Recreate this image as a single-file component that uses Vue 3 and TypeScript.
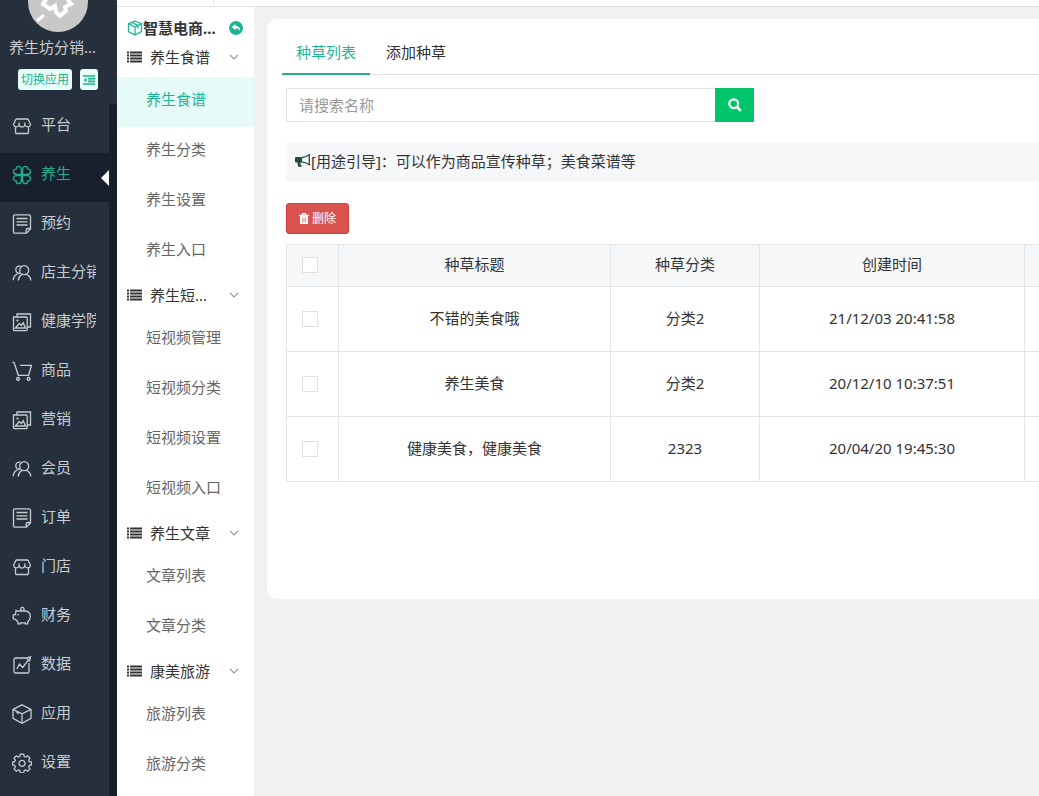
<script setup lang="ts">
import { ref } from 'vue'

interface NavItem { name: string; icon: string; active?: boolean }
interface Group { title: string; items: string[] }
interface Row { title: string; kind: string; time: string; checked: boolean }

const icons: Record<string, string> = {
  shop: 'M5 3h10q1 0 1.500 1l2 4.500a2.900 2.900 0 0 1-5.600.4V6.500M12.900 8.900a3 3 0 0 1-5.800 0V6.500M7.100 8.900a2.900 2.900 0 0 1-5.600-.4l2-4.500Q4 3 5 3M3.500 11.500v5q0 1 1 1h11q1 0 1-1v-5',
  clover: 'M9.400 9.400V5C9.400.3 3.800.3 4.200 4.200.3 3.800.3 9.400 5 9.400zM10.600 9.400V5C10.600.3 16.200.3 15.800 4.200 19.700 3.800 19.700 9.400 15 9.400zM9.400 10.600V15C9.400 19.700 3.800 19.700 4.200 15.800.3 16.200.3 10.600 5 10.600zM10.600 10.600V15C10.600 19.700 16.200 19.700 15.800 15.800 19.700 16.200 19.700 10.600 15 10.600z',
  doc: 'M3 .8h14q1.500 0 1.500 1.500V15L14.500 19.200H3q-1.500 0-1.500-1.500V2.300Q1.500.8 3 .8zM4.500 4.500h11M4.500 7.800h11M4.500 11h11M18.300 14.500h-2.600q-1.500 0-1.500 1.500v3',
  people: 'M12.200 2.700a4.500 4.500 0 1 1 0 9 4.500 4.500 0 0 1 0-9zM8 10.500C5.500 10.300 3.800 8.800 3.800 6.800 3.800 4.200 5.800 2.600 8.500 3.200M9.800 11.500C7.500 13 6.300 15 6.200 17.500M14.500 11.300C17.300 12.500 18.700 14.800 18.800 17.500M5.500 10.800C2.800 12 1.300 14.500 1.200 17.200',
  image: 'M1.500 5h12.700q1 0 1 1v11.700q0 1-1 1H2.500q-1 0-1-1zM5 5V2h13.500v13h-3M3.500 16l3.700-4.500 2.200 2 1.800-2.800 2.300 5.300zM5.500 7.500v2M4.500 8.500h2',
  cart: 'M.5 1.200l1.700.5L6.300 14.300h10.200l3-10H8M6 16.500a1.400 1.400 0 1 0 .1 0zM16.500 16.500a1.400 1.400 0 1 0 .1 0z',
  pig: 'M8 5h4.500c3 0 5 1.500 5.600 3.800q.8 2.700-.6 4.700l-1.800 2.500v1.800h-2.500v-1H8.500v1H6v-1.800L4 13.800l-2.800-1.300V9l2.300-.5L4 4.300 6.500 5.300zM10.300 1.400a1.700 1.700 0 1 0 .1 0zM6 8v1.500',
  chart: 'M14 3H3.500Q2 3 2 4.500v12Q2 18 3.500 18h12q1.500 0 1.500-1.500V8M4.800 14l2.700-5 3.200 3.500L16 5.500M14.500 3l4-1-1 4z',
  box: 'M10 .8l9 4.500v9L10 19.200l-9-4.900v-9zM1 5.300l9 4.500 9-4.500M10 9.800v9.400M4.500 8.700l2 1',
  gear: 'M8.300 1.200h3.400l.5 2.300 1.500.6 2-1.200 2.200 2.200-1.200 2 .6 1.500 2.200.5v2.800l-2.200.6-.6 1.500 1.200 2-2.200 2.200-2-1.200-1.500.6-.5 2.200H8.300l-.5-2.200-1.500-.6-2 1.200-2.200-2.200 1.200-2-.6-1.500L.6 11.900V9.100l2.100-.5.6-1.500-1.200-2 2.200-2.200 2 1.200 1.500-.6zM10 7.400a3 3 0 1 0 .1 0z',
}

const nav: NavItem[] = [
  { name: '平台', icon: 'shop' },
  { name: '养生', icon: 'clover', active: true },
  { name: '预约', icon: 'doc' },
  { name: '店主分销', icon: 'people' },
  { name: '健康学院', icon: 'image' },
  { name: '商品', icon: 'cart' },
  { name: '营销', icon: 'image' },
  { name: '会员', icon: 'people' },
  { name: '订单', icon: 'doc' },
  { name: '门店', icon: 'shop' },
  { name: '财务', icon: 'pig' },
  { name: '数据', icon: 'chart' },
  { name: '应用', icon: 'box' },
  { name: '设置', icon: 'gear' },
]

const groups: Group[] = [
  { title: '养生食谱', items: ['养生食谱', '养生分类', '养生设置', '养生入口'] },
  { title: '养生短...', items: ['短视频管理', '短视频分类', '短视频设置', '短视频入口'] },
  { title: '养生文章', items: ['文章列表', '文章分类'] },
  { title: '康美旅游', items: ['旅游列表', '旅游分类'] },
]

const keyword = ref('')
const all = ref(false)
const rows = ref<Row[]>([
  { title: '不错的美食哦', kind: '分类2', time: '21/12/03 20:41:58', checked: false },
  { title: '养生美食', kind: '分类2', time: '20/12/10 10:37:51', checked: false },
  { title: '健康美食，健康美食', kind: '2323', time: '20/04/20 19:45:30', checked: false },
])
</script>

<template>
  <div class="page">
    <aside class="side">
      <div class="brand">
        <svg class="avatar" viewBox="0 0 60 32" aria-hidden="true">
          <circle cx="30" cy="2" r="30" fill="#c9c8c9" />
          <path d="M19-2l-4 6 7 5 5-3 1 6 4 4 6-5-1-4 6-3-6-8" fill="none" stroke="#fff" stroke-width="4" />
          <path d="M16 15l-7 6" stroke="#fff" stroke-width="3" />
        </svg>
        <div class="shop-name">养生坊分销...</div>
        <div class="brand-actions">
          <button type="button" class="switch">切换应用</button>
          <button type="button" class="fold" aria-label="收起菜单">
            <svg viewBox="0 0 12 10"><path d="M0 1h12M5 3.700h7M5 6.300h7M0 9h12" stroke="currentColor" stroke-width="1.700" /><path d="M3.500 2.800v4.400L.5 5z" fill="currentColor" /></svg>
          </button>
        </div>
      </div>
      <nav class="nav">
        <a v-for="n in nav" :key="n.name" href="#" class="nav-item" :class="{ active: n.active }">
          <svg class="nav-icon" viewBox="0 0 20 20" aria-hidden="true"><path :d="icons[n.icon]" /></svg>
          <span class="nav-name">{{ n.name }}</span>
        </a>
      </nav>
    </aside>

    <div class="body">
      <header class="topbar"><div class="topbar-left"></div></header>
      <div class="content">
        <aside class="sub">
          <div class="sub-title">
            <svg class="cube" viewBox="0 0 16 16" aria-hidden="true"><path d="M8 1l6.500 2.700v8L8 15l-6.500-3.300v-8zM1.500 3.700L8 7l6.500-3.300M8 7v8M4.500 2.500L11 5.500v3" /></svg>
            <strong>智慧电商...</strong>
            <button type="button" class="back" aria-label="返回">
              <svg viewBox="0 0 14 14"><circle cx="7" cy="7" r="7" fill="#1fb594" /><path d="M2.800 6L6.500 3v1.900c3.300 0 4.700 1.700 4.300 5.100C10 8.300 8.700 7.300 6.500 7.300V9z" fill="#fff" /></svg>
            </button>
          </div>
          <section v-for="(g, gi) in groups" :key="g.title">
            <button type="button" class="group-head">
              <svg class="list" viewBox="0 0 15 12" aria-hidden="true"><path d="M0 1.500h2M3 1.500h12M0 4.500h2M3 4.500h12M0 7.500h2M3 7.500h12M0 10.500h2M3 10.500h12" stroke="#333" stroke-width="2" /></svg>
              <span>{{ g.title }}</span>
              <svg class="chevron" viewBox="0 0 10 6" aria-hidden="true"><path d="M1 1l4 4 4-4" fill="none" stroke="#999" stroke-width="1.200" /></svg>
            </button>
            <a v-for="(item, i) in g.items" :key="item" href="#" class="sub-item" :class="{ active: gi === 0 && i === 0 }">{{ item }}</a>
          </section>
        </aside>

        <main class="main">
          <div class="card">
            <nav class="tabs">
              <a href="#" class="tab active">种草列表</a>
              <a href="#" class="tab">添加种草</a>
            </nav>
            <div class="panel">
              <form class="search" @submit.prevent>
                <input v-model="keyword" type="text" placeholder="请搜索名称" aria-label="请搜索名称" />
                <button type="submit" aria-label="搜索">
                  <svg viewBox="0 0 14 14"><circle cx="5.700" cy="5.700" r="4.400" fill="none" stroke="#fff" stroke-width="2.200" /><path d="M9 9l3.800 3.800" stroke="#fff" stroke-width="2.600" /></svg>
                </button>
              </form>
              <div class="guide">
                <svg viewBox="0 0 16 14" aria-hidden="true"><path d="M0 4q0-1 1-1h6v5.500H5.500c-.5 1.500.5 2.500 1.500 3.800-1 .9-2.500 1-3.500.2C2.500 11 2.300 9.500 2.600 8.500H1q-1 0-1-1z" fill="#234f3a" /><path d="M7 3.500C10 3.500 12.500 2 14.300.8v10C12.500 9.500 10 8.200 7 8.200" fill="none" stroke="#234f3a" stroke-width="1.300" /><path d="M14.500 4.500q1.500 1.200 0 2.400" fill="#234f3a" /></svg>
                <span>[用途引导]：可以作为商品宣传种草；美食菜谱等</span>
              </div>
              <button type="button" class="delete">
                <svg viewBox="0 0 10 11" aria-hidden="true"><path d="M3.500 1.800V.6h3v1.200M0 2.300h10" fill="none" stroke="#fff" stroke-width="1.200" /><path d="M1 3h8v7q0 1-1 1H2q-1 0-1-1z" fill="#fff" /><path d="M3.500 4.500v5M5 4.500v5M6.500 4.500v5" stroke="#d9534f" stroke-width=".6" /></svg>
                <span>删除</span>
              </button>
              <table>
                <colgroup>
                  <col class="c-check" /><col class="c-title" /><col class="c-kind" /><col class="c-time" /><col />
                </colgroup>
                <thead>
                  <tr>
                    <th><input v-model="all" type="checkbox" aria-label="全选" /></th>
                    <th>种草标题</th>
                    <th>种草分类</th>
                    <th>创建时间</th>
                    <th></th>
                  </tr>
                </thead>
                <tbody>
                  <tr v-for="r in rows" :key="r.time">
                    <td><input v-model="r.checked" type="checkbox" :aria-label="r.title" /></td>
                    <td>{{ r.title }}</td>
                    <td>{{ r.kind }}</td>
                    <td>{{ r.time }}</td>
                    <td></td>
                  </tr>
                </tbody>
              </table>
            </div>
          </div>
        </main>
      </div>
    </div>
  </div>
</template>

<style>
body {
  background: #f1f1f1;
}
</style>

<style scoped>
* {
  box-sizing: border-box;
}
.page {
  display: flex;
  min-height: 100vh;
  font: 15px/22px "Noto Sans", "Noto Sans CJK SC", sans-serif;
  color: #333;
}
a {
  color: inherit;
  text-decoration: none;
}
button,
input {
  font: inherit;
  margin: 0;
}
button {
  border: 0;
  padding: 0;
  background: none;
  color: inherit;
  cursor: pointer;
}
svg {
  display: block;
  flex: none;
}

.side {
  flex: none;
  width: 117px;
  display: flex;
  flex-direction: column;
  background: #26303c;
  color: #c8ccd1;
}
.brand {
  height: 104px;
}
.avatar {
  width: 60px;
  height: 32px;
  margin-left: 28px;
}
.shop-name {
  margin: 4px 0 11px 9px;
  white-space: nowrap;
}
.brand-actions {
  display: flex;
  gap: 8px;
  margin-left: 18px;
}
.brand-actions button {
  display: flex;
  align-items: center;
  justify-content: center;
  height: 21px;
  border-radius: 3px;
  background: #e6fdf8;
  color: #22b08f;
  font-size: 12px;
}
.switch {
  width: 54px;
}
.fold {
  width: 18px;
}
.fold svg {
  width: 12px;
  height: 10px;
}
.nav {
  flex: 1;
  border-right: 8px solid #17202b;
}
.nav-item {
  position: relative;
  display: flex;
  align-items: center;
  gap: 9px;
  height: 49px;
  padding: 0 13px 6px 12px;
}
.nav-item.active {
  background: #19202d;
  color: #22ad8c;
}
.nav-item.active::after {
  content: "";
  position: absolute;
  right: 0;
  top: 17px;
  border: 8px solid transparent;
  border-left: 0;
  border-right-color: #fff;
}
.nav-icon {
  width: 20px;
  height: 20px;
  fill: none;
  stroke: currentColor;
  stroke-width: 1.3;
}
.nav-name {
  padding-bottom: 3px;
  overflow: hidden;
  white-space: nowrap;
}

.body {
  flex: 1;
  min-width: 0;
  display: flex;
  flex-direction: column;
}
.topbar {
  display: flex;
  height: 7px;
  background: #fff;
  border-bottom: 1px solid #e4e4e4;
}
.topbar-left {
  width: 97px;
  border-right: 1px solid #e8e8e8;
}
.content {
  flex: 1;
  display: flex;
}
.sub {
  flex: none;
  width: 137px;
  background: #fff;
}
.sub-title {
  display: flex;
  align-items: center;
  height: 32px;
  padding: 10px 11px 0 10px;
}
.sub-title strong {
  flex: 1;
  white-space: nowrap;
}
.cube {
  width: 16px;
  height: 16px;
  fill: none;
  stroke: #1fb594;
  stroke-width: 1.3;
}
.back svg {
  width: 14px;
  height: 14px;
}
.group-head {
  display: flex;
  align-items: center;
  width: 100%;
  height: 38px;
  padding: 0 15px 2px 10px;
}
.list {
  width: 15px;
  height: 12px;
  margin-right: 8px;
}
.chevron {
  width: 10px;
  height: 6px;
  margin-left: auto;
}
.sub-item {
  display: block;
  height: 50px;
  padding-left: 29px;
  line-height: 44px;
  color: #666;
}
.sub-item.active {
  background: #e6fbf7;
  color: #1fb594;
}

.main {
  flex: 1;
  min-width: 0;
  padding: 12px 0 0 13px;
}
.card {
  min-height: 580px;
  padding: 14px 0 0 15px;
  background: #fff;
  border-radius: 10px 0 0 10px;
}
.tabs {
  display: flex;
  gap: 2px;
  border-bottom: 1px solid #dfe2e5;
}
.tab {
  height: 41px;
  padding: 0 14px;
  line-height: 38px;
}
.tab.active {
  margin-bottom: -1px;
  height: 42px;
  border-bottom: 2px solid #2ba88c;
  color: #1fb594;
}
.panel {
  padding: 13px 0 0 4px;
}
.search {
  display: flex;
  width: 468px;
  max-width: 100%;
  height: 34px;
}
.search input {
  flex: 1;
  min-width: 0;
  padding: 0 12px;
  border: 1px solid #e0e3e5;
  border-right: 0;
  background: #fff;
  color: #333;
  outline: 0;
}
.search input::placeholder {
  color: #999;
}
.search button {
  display: flex;
  align-items: center;
  justify-content: center;
  width: 39px;
  background: #00c56b;
}
.search button svg {
  width: 14px;
  height: 14px;
}
.guide {
  display: flex;
  align-items: center;
  height: 39px;
  margin: 20px 0 22px;
  padding: 0 0 2px 9px;
  background: #f6f7f9;
  border-radius: 3px 0 0 3px;
}
.guide svg {
  width: 16px;
  height: 14px;
}
.delete {
  display: flex;
  align-items: center;
  justify-content: center;
  gap: 3px;
  width: 63px;
  height: 31px;
  margin-bottom: 10px;
  border: 1px solid #d43f3a;
  border-radius: 3px;
  background: #d9534f;
  color: #fff;
  font-size: 12px;
}
.delete svg {
  width: 10px;
  height: 11px;
}
table {
  width: 100%;
  table-layout: fixed;
  border-collapse: collapse;
}
.c-check {
  width: 52px;
}
.c-title {
  width: 272px;
}
.c-kind {
  width: 149px;
}
.c-time {
  width: 265px;
}
th,
td {
  height: 65px;
  padding: 0 0 2px;
  border: 1px solid #e2e5e8;
  font-weight: 400;
  text-align: center;
  vertical-align: middle;
}
th {
  height: 42px;
  padding-bottom: 4px;
  background: #f6f7f9;
}
th:last-child,
td:last-child {
  border-right: 0;
}
table input {
  appearance: none;
  display: block;
  width: 16px;
  height: 16px;
  margin: 2px 0 0 15px;
  border: 1px solid #e0e0e0;
  background: #fff;
}
table input:checked {
  background: #1fb594;
}
</style>
